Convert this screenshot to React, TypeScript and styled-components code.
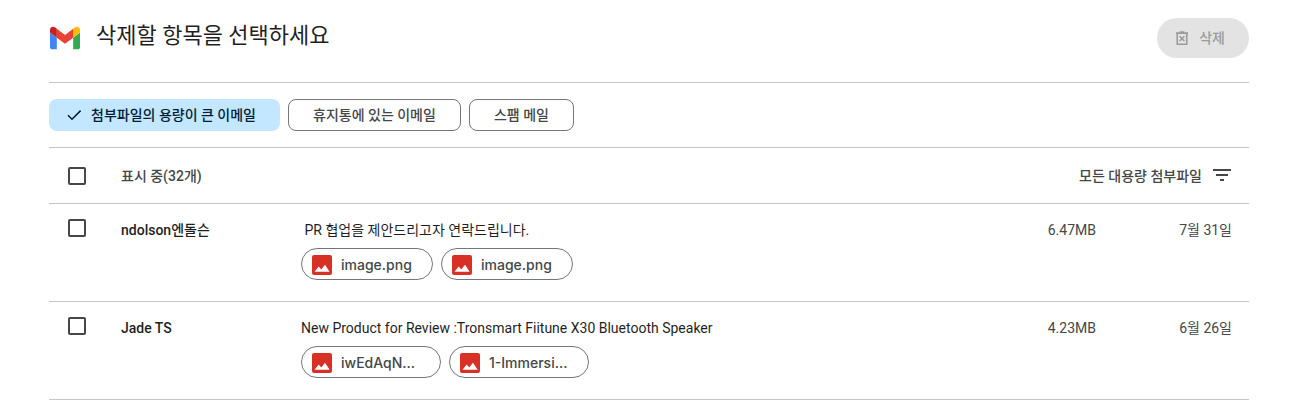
import React from "react";
import styled, { createGlobalStyle } from "styled-components";

const GlobalStyle = createGlobalStyle`
  * { box-sizing: border-box; }
  body {
    margin: 0;
    background: #fff;
    color: #1f1f1f;
    font-family: Roboto, "Noto Sans CJK KR", sans-serif;
    font-size: 14px;
    line-height: 20px;
  }
  button { font: inherit; cursor: pointer; }
`;

const Page = styled.main`
  padding: 0 54px 0 49px;
`;

const Header = styled.header`
  display: flex;
  align-items: center;
  gap: 16px;
  padding: 18px 0 24px;
  border-bottom: 1px solid #c4c7c5;
`;

const Logo = styled.svg`
  width: 30px;
  height: 24px;
  margin-left: 1px;
`;

const Title = styled.h1`
  flex: 1;
  margin: 0;
  padding-bottom: 4px;
  font-size: 22px;
  line-height: 28px;
  font-weight: 400;
`;

const DeleteButton = styled.button`
  display: flex;
  align-items: center;
  gap: 8px;
  height: 40px;
  padding: 0 24px 0 16px;
  border: 0;
  border-radius: 20px;
  background: #e3e3e3;
  color: #9b9b9b;
  font-weight: 500;
`;

const Filters = styled.nav`
  display: flex;
  gap: 8px;
  padding: 16px 0;
  border-bottom: 1px solid #c4c7c5;
`;

const FilterChip = styled.button<{ $selected?: boolean }>`
  display: flex;
  align-items: center;
  gap: 8px;
  height: 32px;
  padding: ${(p) => (p.$selected ? "0 24px 0 16px" : "0 24px")};
  border: ${(p) => (p.$selected ? "0" : "1px solid #747775")};
  border-radius: 8px;
  background: ${(p) => (p.$selected ? "#c2e7ff" : "#fff")};
  color: ${(p) => (p.$selected ? "#001d35" : "#444746")};
  font-weight: 500;
`;

const MailTable = styled.table`
  width: 100%;
  table-layout: fixed;
  border-spacing: 0;
`;

const Col = styled.col<{ $width?: number }>`
  width: ${(p) => (p.$width ? `${p.$width}px` : "auto")};
`;

const HeadCell = styled.th<{ $align?: string }>`
  height: 56px;
  padding: 0;
  border-bottom: 1px solid #c4c7c5;
  color: #444746;
  font-weight: 500;
  text-align: ${(p) => p.$align ?? "left"};
`;

const Cell = styled.td<{ $align?: string; $weight?: number; $muted?: boolean; $check?: boolean }>`
  height: 98px;
  padding: ${(p) => (p.$check ? "15px" : "16px")} 0 20px;
  border-bottom: 1px solid #c4c7c5;
  vertical-align: top;
  text-align: ${(p) => p.$align ?? "left"};
  font-weight: ${(p) => p.$weight ?? 400};
  color: ${(p) => (p.$muted ? "#444746" : "#1f1f1f")};
  &:last-child { padding-right: 17px; }
`;

const Checkbox = styled.input`
  appearance: none;
  display: block;
  width: 18px;
  height: 18px;
  margin: 0 0 0 19px;
  border: 2px solid #444746;
  border-radius: 2px;
  &:checked { background: #0b57d0; border-color: #0b57d0; }
`;

const SortButton = styled.button`
  display: inline-flex;
  align-items: center;
  gap: 8px;
  padding: 0 15px 0 0;
  border: 0;
  background: none;
  color: #444746;
  vertical-align: middle;
`;

const Subject = styled.div`
  white-space: pre;
  overflow: hidden;
  text-overflow: ellipsis;
`;

const Attachments = styled.div`
  display: flex;
  gap: 8px;
  margin-top: 8px;
`;

const Attachment = styled.button<{ $wide?: boolean }>`
  display: flex;
  align-items: center;
  gap: 9px;
  width: ${(p) => (p.$wide ? 140 : 132)}px;
  height: 32px;
  padding: 1px 10px 0;
  border: 1px solid #747775;
  border-radius: 16px;
  background: #fff;
  color: #444746;
  font-family: Inter, "Noto Sans CJK KR", sans-serif;
  font-weight: 500;
`;

const GmailLogo = () => (
  <Logo viewBox="52 42 88 66" aria-hidden="true">
    <path fill="#4285f4" d="M58 108h14V74L52 59v43c0 3.32 2.69 6 6 6" />
    <path fill="#34a853" d="M120 108h14c3.32 0 6-2.69 6-6V59l-20 15" />
    <path fill="#fbbc04" d="M120 48v26l20-15v-8c0-7.42-8.47-11.65-14.4-7.2" />
    <path fill="#ea4335" d="M72 74V48l24 18 24-18v26L96 92" />
    <path fill="#c5221f" d="M52 51v8l20 15V48l-5.6-4.2c-5.94-4.45-14.4-.22-14.4 7.2" />
  </Logo>
);

const TrashIcon = () => (
  <svg width="18" height="18" viewBox="0 0 18 18" fill="none" stroke="currentColor" strokeWidth="1.6" aria-hidden="true">
    <path d="M3 4.1h12M6.5 3h5M4.25 4.5v10.75h9.5V4.5M6.6 7.2l4.8 4.8M11.4 7.2l-4.8 4.8" />
  </svg>
);

const CheckIcon = () => (
  <svg width="18" height="18" viewBox="0 0 18 18" fill="none" stroke="currentColor" strokeWidth="1.5" aria-hidden="true">
    <path d="M3 9.2l4 4 8.6-8.6" />
  </svg>
);

const FilterIcon = () => (
  <svg width="24" height="24" viewBox="0 0 24 24" fill="currentColor" aria-hidden="true">
    <path d="M10 17h4v-2h-4v2zM3 5v2h18V5H3zm3 7h12v-2H6v2z" />
  </svg>
);

const ImageIcon = () => (
  <svg width="20" height="20" viewBox="0 0 20 20" aria-hidden="true">
    <rect width="20" height="20" rx="2" fill="#d93025" />
    <path fill="#fff" d="M2.5 16.8l4.2-5.4 2.5 3 3.8-4.6 4.6 7z" />
  </svg>
);

const mails = [
  { sender: "ndolson엔돌슨", subject: " PR 협업을 제안드리고자 연락드립니다.", size: "6.47MB", date: "7월 31일", wide: false, files: ["image.png", "image.png"] },
  { sender: "Jade TS", subject: "New Product for Review :Tronsmart Fiitune X30 Bluetooth Speaker", size: "4.23MB", date: "6월 26일", wide: true, files: ["iwEdAqN...", "1-Immersi..."] },
];

export default function App() {
  return (
    <>
      <GlobalStyle />
      <Page>
        <Header>
          <GmailLogo />
          <Title>삭제할 항목을 선택하세요</Title>
          <DeleteButton disabled>
            <TrashIcon />
            삭제
          </DeleteButton>
        </Header>
        <Filters>
          <FilterChip $selected aria-pressed="true">
            <CheckIcon />
            첨부파일의 용량이 큰 이메일
          </FilterChip>
          <FilterChip>휴지통에 있는 이메일</FilterChip>
          <FilterChip>스팸 메일</FilterChip>
        </Filters>
        <MailTable>
          <colgroup>
            <Col $width={72} />
            <Col $width={180} />
            <Col />
            <Col $width={120} />
            <Col $width={153} />
          </colgroup>
          <thead>
            <tr>
              <HeadCell><Checkbox type="checkbox" aria-label="모두 선택" /></HeadCell>
              <HeadCell>표시 중(32개)</HeadCell>
              <HeadCell colSpan={3} $align="right">
                <SortButton>
                  모든 대용량 첨부파일
                  <FilterIcon />
                </SortButton>
              </HeadCell>
            </tr>
          </thead>
          <tbody>
            {mails.map((mail) => (
              <tr key={mail.sender}>
                <Cell $check><Checkbox type="checkbox" aria-label={mail.sender} /></Cell>
                <Cell $weight={500}>{mail.sender}</Cell>
                <Cell>
                  <Subject>{mail.subject}</Subject>
                  <Attachments>
                    {mail.files.map((file, i) => (
                      <Attachment key={i} $wide={mail.wide}>
                        <ImageIcon />
                        {file}
                      </Attachment>
                    ))}
                  </Attachments>
                </Cell>
                <Cell $align="right" $muted>{mail.size}</Cell>
                <Cell $align="right" $muted>{mail.date}</Cell>
              </tr>
            ))}
          </tbody>
        </MailTable>
      </Page>
    </>
  );
}
